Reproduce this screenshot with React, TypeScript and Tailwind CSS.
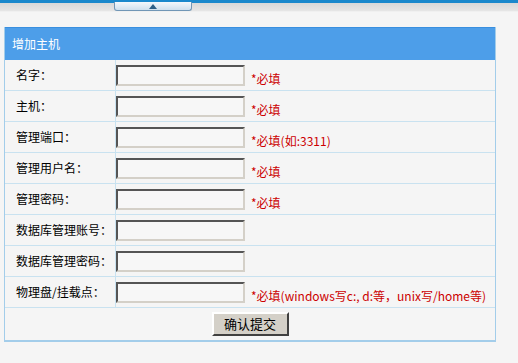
const rows: { label: string; note?: string }[] = [
  { label: "名字：", note: "*必填" },
  { label: "主机：", note: "*必填" },
  { label: "管理端口：", note: "*必填(如:3311)" },
  { label: "管理用户名：", note: "*必填" },
  { label: "管理密码：", note: "*必填" },
  { label: "数据库管理账号：" },
  { label: "数据库管理密码：" },
  { label: "物理盘/挂载点：", note: "*必填(windows写c:, d:等，unix写/home等)" },
];

const font = "font-['SimSun','Noto_Sans_CJK_SC',sans-serif]";

export default function App() {
  return (
    <div lang="zh-CN" className={`w-[518px] h-[363px] bg-[#f5f5f5] overflow-hidden ${font} text-[12px] text-black`}>
      {/* TOP BAR */}
      <div className="h-[3px] bg-[#1a88cc]" />
      <div className="h-[9px] bg-gradient-to-b from-[#d8d8d8] to-[#e6e6e6] border-b border-[#f0f0f0] flex">
        <div className="ml-[114px] w-[78px] h-[9px] -mt-px bg-gradient-to-b from-[#f4f8fc] to-[#cfe0ee] border border-t-0 border-[#7196b6] rounded-b-[3px] flex items-center justify-center">
          <svg width="8" height="5" viewBox="0 0 8 5">
            <polygon points="4,0 8,5 0,5" fill="#2d5f87" />
          </svg>
        </div>
      </div>

      {/* PANEL */}
      <div className="ml-[4px] mt-[15px] w-[492px] border border-t-0 border-b-2 border-[#a3cdea]">
        <div className="h-[33px] bg-[#4d9ee9] border-t border-[#3a8fdf] flex items-center pl-[7px] text-white">
          增加主机
        </div>

        {rows.map((r) => (
          <div key={r.label} className="flex h-[31px] border-b border-[#c9e2f0]">
            <div className="w-[111px] border-r border-[#c9e2f0] flex items-center pl-[11px]">
              {r.label}
            </div>
            <div className="flex items-center">
              <input
                className="w-[129px] h-[21px] bg-[#f7f7f7] border-2 border-t-[#555] border-l-[#555] border-b-[#d4d0c8] border-r-[#d4d0c8] outline-none"
              />
              {r.note && (
                <span className="ml-[6px] pt-[7px] text-[#cc0000] whitespace-nowrap">{r.note}</span>
              )}
            </div>
          </div>
        ))}

        <div className="h-[32px] flex items-center justify-center">
          <button className="w-[77px] h-[24px] bg-[#d4d0c8] border-2 border-t-white border-l-white border-b-[#404040] border-r-[#404040] text-[13px] text-black">
            确认提交
          </button>
        </div>
      </div>
    </div>
  );
}
